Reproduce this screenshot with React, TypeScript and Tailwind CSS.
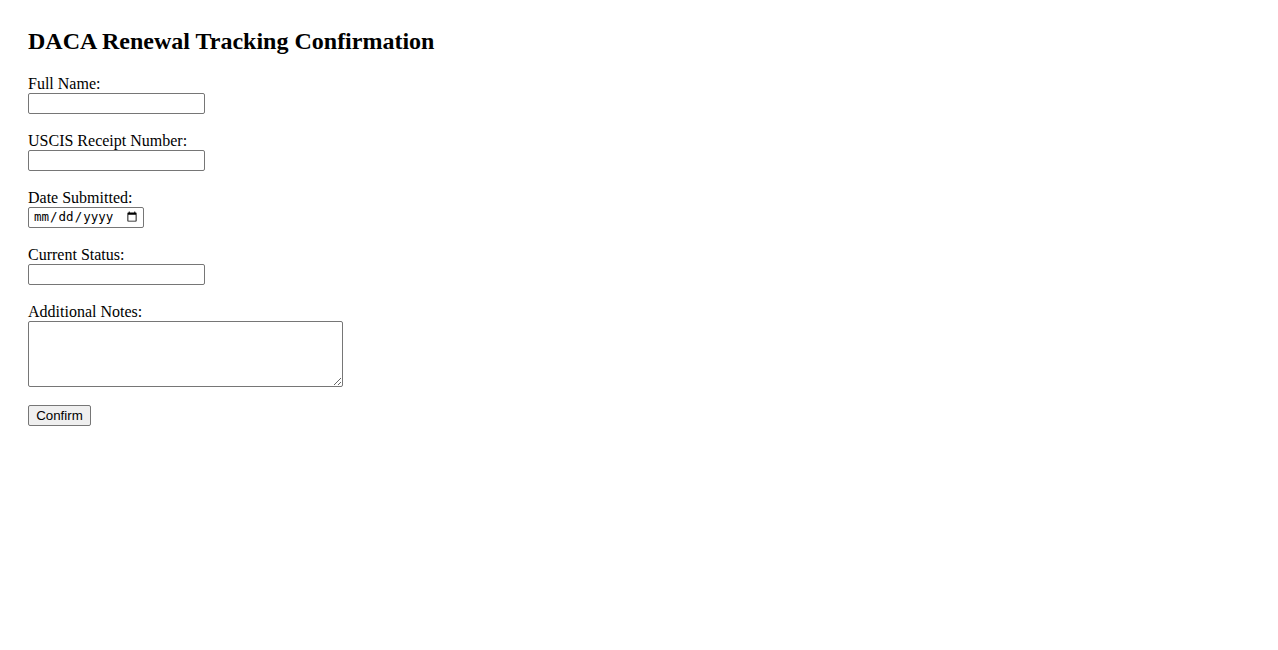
const fieldClass =
  "block w-[177px] h-[21px] border border-[#767676] rounded-[2px] bg-white px-[2px] py-[1px] text-[13.33px] font-['Liberation_Sans',Arial,sans-serif]";

const Field = ({ label, children }: { label: string; children: React.ReactNode }) => {
  return (
    <div className="mb-[18px]">
      <label className="block h-[18px] leading-[18px]">{label}</label>
      {children}
    </div>
  );
};

export default function App() {
  return (
    <div className="min-h-[650px] bg-white p-[28px] text-black text-[16px] font-['Liberation_Serif','Times_New_Roman',serif]">
      <h2 className="mb-[21px] h-[26px] text-[24px] leading-[26px] font-bold">
        DACA Renewal Tracking Confirmation
      </h2>
      <form onSubmit={(e) => e.preventDefault()}>
        <Field label="Full Name:">
          <input type="text" className={fieldClass} />
        </Field>
        <Field label="USCIS Receipt Number:">
          <input type="text" className={fieldClass} />
        </Field>
        <Field label="Date Submitted:">
          <input
            type="date"
            className="block w-[116px] h-[21px] border border-[#767676] rounded-[2px] bg-white pl-[4px] pr-[3px] text-[12.5px] font-['DejaVu_Sans_Mono',monospace]"
          />
        </Field>
        <Field label="Current Status:">
          <input type="text" className={fieldClass} />
        </Field>
        <Field label="Additional Notes:">
          <textarea className="block w-[315px] h-[66px] border border-[#767676] rounded-[2px] bg-white p-[2px] text-[13.33px] font-['DejaVu_Sans_Mono',monospace]" />
        </Field>
        <button
          type="submit"
          className="block h-[21px] w-[63px] border border-[#767676] rounded-[2px] bg-[#efefef] px-[6px] text-[13.33px] leading-[17px] font-['Liberation_Sans',Arial,sans-serif]"
        >
          Confirm
        </button>
      </form>
    </div>
  );
}
